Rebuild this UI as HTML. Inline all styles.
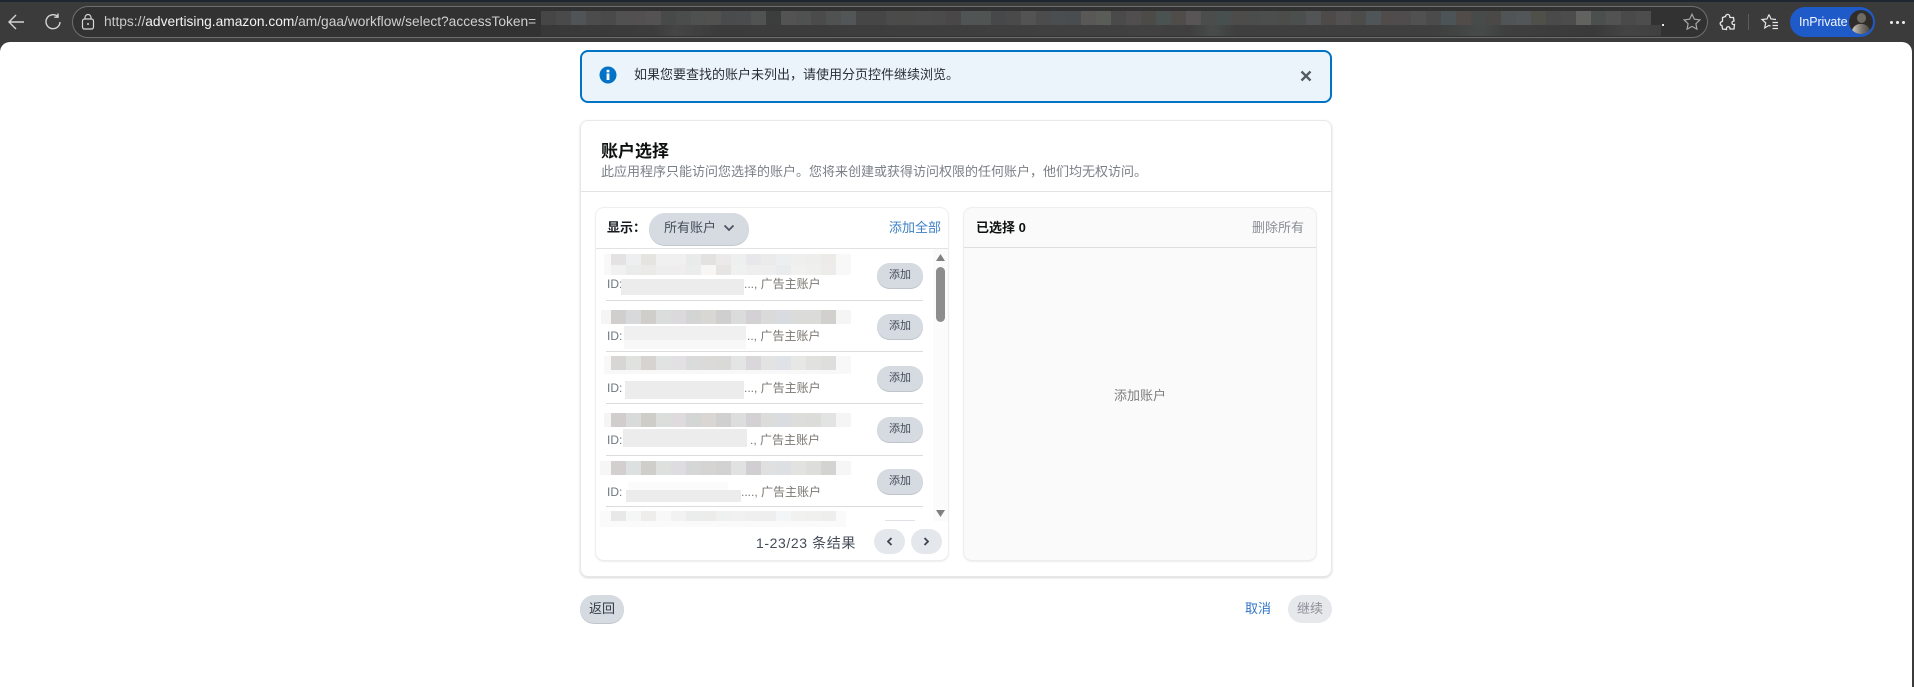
<!DOCTYPE html>
<html lang="zh"><head><meta charset="utf-8"><title>账户选择</title>
<style>
html,body{margin:0;padding:0;width:1914px;height:687px;overflow:hidden;background:#3b3b3b}
body{position:relative;font-family:"Liberation Sans","Noto Sans CJK SC",sans-serif;color:#16191f}
div,span,svg{position:absolute;white-space:nowrap;box-sizing:border-box}
.m{display:flex;position:absolute}
.m i{display:block;width:15px;height:100%;flex:none}
.btn{left:877px;width:46px;height:25px;border-radius:13px;background:#d6dbe2;box-shadow:0 1px 0 #bfc4cb;color:#444c58;font-size:11px;line-height:25px;text-align:center}
.ln{left:606px;width:317px;height:1px;background:#dcdcdc}
.id{left:607px;font-size:12px;line-height:16px;color:#6d7680}
.t{font-size:12px;line-height:16px;color:#7b7670}
.tx{font-size:13px;line-height:18px}
</style></head><body>

<!-- browser chrome -->
<div style="left:0;top:0;width:1914px;height:2px;background:#1e2731"></div>
<svg style="left:6px;top:12px" width="20" height="20" viewBox="0 0 20 20" fill="none" stroke="#d5d5d5" stroke-width="1.4"><path d="M18 10H3M10 3L3 10L10 17"/></svg>
<svg style="left:43px;top:12px" width="20" height="20" viewBox="0 0 20 20" fill="none" stroke="#d5d5d5" stroke-width="1.4"><path d="M14.8 4.6A7 7 0 1 0 17 10M15 1.5V5.2H11.3"/></svg>
<div style="left:72px;top:6px;width:1636px;height:32px;border:1.5px solid #6f6f6f;border-radius:16px;background:#323232"></div>
<svg style="left:80px;top:13px" width="16" height="18" viewBox="0 0 16 18" fill="none" stroke="#d8d8d8" stroke-width="1.2"><rect x="2.5" y="6" width="11" height="10" rx="2"/><path d="M5 6V4.5a3 3 0 0 1 6 0V6"/><circle cx="8" cy="11" r="1" fill="#d8d8d8" stroke="none"/></svg>
<div style="left:104px;top:13px;font-size:13.75px;line-height:18px;color:#f2f2f2"><span style="position:static;color:#c9c9c9">https://</span>advertising.amazon.com<span style="position:static;color:#d0d0d0">/am/gaa/workflow/select?accessToken=</span></div>

<div class="m" style="left:541px;top:11px;height:14px;width:1125px">
<i style="background:#464646"></i><i style="background:#4a4a4a"></i><i style="background:#505456"></i><i style="background:#4c4c4c"></i><i style="background:#4a4a4a"></i><i style="background:#515151"></i><i style="background:#525050"></i><i style="background:#545252"></i><i style="background:#484a4a"></i><i style="background:#4b4d4c"></i><i style="background:#4f5150"></i><i style="background:#515150"></i><i style="background:#4a4b4c"></i><i style="background:#4a4c4d"></i><i style="background:#515252"></i><i style="background:#3b3e3c"></i><i style="background:#525352"></i><i style="background:#505252"></i><i style="background:#4b4b4b"></i><i style="background:#505251"></i><i style="background:#525656"></i><i style="background:#464646"></i><i style="background:#464646"></i><i style="background:#4b4b4b"></i><i style="background:#4b4b4a"></i><i style="background:#4c4c4c"></i><i style="background:#4b4b4b"></i><i style="background:#4a4749"></i><i style="background:#505455"></i><i style="background:#505453"></i><i style="background:#46484a"></i><i style="background:#4a4a4a"></i><i style="background:#535353"></i><i style="background:#4c4c4c"></i>
<i style="background:#4a4e50"></i><i style="background:#4a4d50"></i><i style="background:#5a5857"></i><i style="background:#5a5c58"></i><i style="background:#4a4a4a"></i><i style="background:#504e4e"></i><i style="background:#4d4b48"></i><i style="background:#4a5351"></i><i style="background:#4f4c4a"></i><i style="background:#575555"></i><i style="background:#4b4c4c"></i><i style="background:#48504f"></i><i style="background:#4e4c4a"></i><i style="background:#4b4c4c"></i><i style="background:#4c4e4d"></i><i style="background:#4c4d4b"></i><i style="background:#4b504f"></i><i style="background:#525455"></i><i style="background:#4f4a4a"></i><i style="background:#525050"></i><i style="background:#4c4d4b"></i><i style="background:#505559"></i><i style="background:#514c4c"></i><i style="background:#4e4c4c"></i><i style="background:#515151"></i><i style="background:#4b4b4b"></i><i style="background:#4d5457"></i><i style="background:#514b4a"></i><i style="background:#474c4b"></i><i style="background:#4b4848"></i><i style="background:#505454"></i><i style="background:#535659"></i><i style="background:#50504a"></i><i style="background:#4a4a4a"></i><i style="background:#4c4c4c"></i><i style="background:#626260"></i><i style="background:#4b504e"></i><i style="background:#525252"></i><i style="background:#4a4a4a"></i><i style="background:#4d4d4d"></i></div>
<div style="left:541px;top:25px;width:1120px;height:11px;background:linear-gradient(90deg,#383838 0,#3c3c3c 10%,#454545 12%,#3b3b3b 16%,#3e3e3e 35%,#414141 55%,#3f3f3f 58%,#474c4b 60%,#3f3f3f 62%,#3f3f3f 80%,#464b4a 84%,#3f3f3f 86%,#3a3a3a 94%,#444444 97%,#404040 100%)"></div>
<div style="left:1662px;top:24px;width:2px;height:2px;background:#e8e8e8"></div>

<svg style="left:1682px;top:12px" width="20" height="20" viewBox="0 0 20 20" fill="none" stroke="#a8a8a8" stroke-width="1.2"><path d="M10 2.2l2.4 5 5.5.7-4 3.8 1 5.4-4.9-2.7-4.9 2.7 1-5.4-4-3.8 5.5-.7z"/></svg>
<svg style="left:1718px;top:12px" width="20" height="20" viewBox="0 0 20 20" fill="none" stroke="#e6e6e6" stroke-width="1.3"><path d="M7.5 4.5C7.5 2.5 10.5 1.500 11.500 3.500C12 4.500 11.500 5 12 5.500L15.500 5.500L16 9C14.500 9 13.800 10 14 11.200C14.200 12.500 15.500 12.800 16.500 12.500L16 17L12 17C12.300 15.500 11 14.500 9.800 14.800C8.500 15.100 8.200 16.300 8.500 17.500L4.500 17L4 13.500C2 13.500 1.500 10.500 3.500 9.800C4.500 9.500 4.500 9.800 4.500 9L4.500 5.500z"/></svg>
<div style="left:1748px;top:14px;width:1px;height:16px;background:#5c5c5c"></div>
<svg style="left:1760px;top:12px" width="20" height="20" viewBox="0 0 20 20" fill="none" stroke="#e6e6e6" stroke-width="1.2"><path d="M9 2.500l2 4.500 5 .5M9 2.500l-2 4.500-5 .5 3.700 3.400-1 5 4.300-2.500 1.500.8M12.500 10.500h5.500M12.500 13.500h5.500M12.500 16.500h5.500"/></svg>
<div style="left:1790px;top:7px;width:85px;height:30px;border-radius:15px;background:#1f5bc8"></div>
<div style="left:1799px;top:13px;font-size:12.500px;line-height:18px;color:#f2f6ff;font-weight:400;letter-spacing:-.1px">InPrivate</div>
<div style="left:1849px;top:10px;width:24px;height:24px;border-radius:50%;overflow:hidden;background:#2f2c29">
<div style="left:8px;top:3px;width:9px;height:10px;border-radius:50%;background:#6f6a64"></div>
<div style="left:3px;top:14px;width:18px;height:12px;border-radius:8px 8px 0 0;background:linear-gradient(90deg,#cfc9bf,#7a756e 55%,#4a4642)"></div></div>
<div style="left:1890px;top:21px;width:3px;height:3px;background:#eee;border-radius:50%"></div>
<div style="left:1896px;top:21px;width:3px;height:3px;background:#eee;border-radius:50%"></div>
<div style="left:1902px;top:21px;width:3px;height:3px;background:#eee;border-radius:50%"></div>

<!-- page -->
<div style="left:0;top:42px;width:1912px;height:645px;background:#fff;border-radius:10px 10px 0 0"></div>

<!-- alert -->
<div style="left:580px;top:50px;width:752px;height:53px;background:#ebf3fb;border:2px solid #0073c7;border-radius:8px"></div>
<svg style="left:599px;top:66px" width="18" height="18" viewBox="0 0 18 18"><circle cx="9" cy="9" r="8.500" fill="#0073c7"/><rect x="7.600" y="7.500" width="2.800" height="6.500" fill="#fff"/><rect x="7.600" y="3.800" width="2.800" height="2.600" fill="#fff"/></svg>
<div class="tx" style="left:634px;top:66px;color:#2a2f36">如果您要查找的账户未列出，请使用分页控件继续浏览。</div>
<svg style="left:1300px;top:70px" width="12" height="12" viewBox="0 0 12 12" stroke="#545b64" stroke-width="2.300" fill="none"><path d="M1.500 1.500L10.500 10.500M10.500 1.500L1.500 10.500"/></svg>

<!-- card -->
<div style="left:580px;top:120px;width:752px;height:457px;background:#fff;border:1px solid #e8e8e8;border-radius:8px;box-shadow:0 1px 2px rgba(0,0,0,.16)"></div>
<div style="left:601px;top:140px;font-size:17px;line-height:24px;font-weight:700;color:#0f1111">账户选择</div>
<div class="tx" style="left:601px;top:163px;color:#7b7f86">此应用程序只能访问您选择的账户。您将来创建或获得访问权限的任何账户，他们均无权访问。</div>
<div style="left:581px;top:191px;width:750px;height:1px;background:#e3e3e3"></div>

<!-- left panel -->
<div style="left:596px;top:208px;width:352px;height:352px;background:#fff;border-radius:8px;box-shadow:0 0 0 1px #eeeeee,0 1px 2px rgba(0,0,0,.18)"></div>
<div class="tx" style="left:607px;top:219px;font-weight:700;color:#16191f">显示：</div>
<div style="left:649px;top:213px;width:100px;height:32px;border-radius:16px;background:#d6dbe2;box-shadow:0 1px 0 #c3c8cf"></div>
<div class="tx" style="left:664px;top:219px;color:#444c58">所有账户</div>
<svg style="left:723px;top:224px" width="12" height="8" viewBox="0 0 12 8" fill="none" stroke="#4a5260" stroke-width="1.700"><path d="M1.500 1.500L6 6L10.500 1.500"/></svg>
<div class="tx" style="left:889px;top:219px;color:#3d7fc4">添加全部</div>
<div style="left:596px;top:248px;width:352px;height:1px;background:#e2e2e2"></div>

<!-- scrollbar -->
<div style="left:933px;top:249px;width:15px;height:272px;background:#fbfbfb"></div>
<svg style="left:936px;top:254px" width="9" height="7" viewBox="0 0 9 7"><path d="M4.500 0L9 7H0z" fill="#808080"/></svg>
<div style="left:936px;top:267px;width:9px;height:55px;border-radius:5px;background:#8d8d8d"></div>
<svg style="left:936px;top:510px" width="9" height="7" viewBox="0 0 9 7"><path d="M0 0H9L4.500 7z" fill="#808080"/></svg>

<!-- row 1 -->
<div style="left:604px;top:254px;width:247px;height:21px;background:#f8f8f9"></div>
<div class="m" style="left:611px;top:254px;height:11px"><i style="background:#e4e2e2"></i><i style="background:#edeff0"></i><i style="background:#e6e4e1"></i><i style="background:#eff0ef"></i><i style="background:#f0f0f0"></i><i style="background:#e9eaea"></i><i style="background:#e4e2e0"></i><i style="background:#ebe9e9"></i><i style="background:#eef0f0"></i><i style="background:#e8e8ea"></i><i style="background:#ecebeb"></i><i style="background:#eceef0"></i><i style="background:#efefed"></i><i style="background:#eeeeec"></i><i style="background:#ecebe8"></i></div>
<div class="m" style="left:611px;top:265px;height:10px"><i style="background:#f1f1f1"></i><i style="background:#eaebeb"></i><i style="background:#eceae8"></i><i style="background:#eeeeee"></i><i style="background:#efedee"></i><i style="background:#ebecec"></i><i style="background:#f7f6f4"></i><i style="background:#e7e4e4"></i><i style="background:#eff0f0"></i><i style="background:#eeeeef"></i><i style="background:#efeeee"></i><i style="background:#e9ebed"></i><i style="background:#f1f1ef"></i><i style="background:#efefed"></i><i style="background:#edecea"></i></div>
<div class="id" style="top:276px">ID:</div>
<div style="left:621px;top:279px;width:123px;height:16px;background:#ececec"></div>
<div class="t" style="left:744px;top:276px">..., 广告主账户</div>
<div class="btn" style="top:263px">添加</div>
<div class="ln" style="top:300px"></div>

<!-- row 2 -->
<div style="left:601px;top:310px;width:250px;height:14px;background:#f5f5f5"></div>
<div class="m" style="left:611px;top:310px;height:14px"><i style="background:#d1cece"></i><i style="background:#d7d9db"></i><i style="background:#cfceca"></i><i style="background:#d9dddb"></i><i style="background:#dcd9dd"></i><i style="background:#d3d5d5"></i><i style="background:#d9d7d4"></i><i style="background:#cfcfcf"></i><i style="background:#dadcdc"></i><i style="background:#d3d1d4"></i><i style="background:#d9dad9"></i><i style="background:#d8dbdf"></i><i style="background:#dbdcd9"></i><i style="background:#dbdbd9"></i><i style="background:#d1d0cc"></i></div>
<div class="id" style="top:328px">ID:</div>
<div style="left:624px;top:326px;width:122px;height:14px;background:#f0f0f0"></div>
<div style="left:624px;top:340px;width:122px;height:9px;background:#f8f8f8"></div>
<div class="t" style="left:747px;top:328px">.., 广告主账户</div>
<div class="btn" style="top:314px">添加</div>
<div class="ln" style="top:351px"></div>

<!-- row 3 -->
<div style="left:604px;top:356px;width:247px;height:18px;background:#f8f8f8"></div>
<div class="m" style="left:611px;top:356px;height:14px"><i style="background:#d7d6d4"></i><i style="background:#e0e2e0"></i><i style="background:#d6d3d0"></i><i style="background:#e0e3e1"></i><i style="background:#e2e0e3"></i><i style="background:#dadcdb"></i><i style="background:#dbdad8"></i><i style="background:#d9d9d7"></i><i style="background:#e3e4e4"></i><i style="background:#d9d7d9"></i><i style="background:#e4e3e3"></i><i style="background:#dfe2e6"></i><i style="background:#e7e7e5"></i><i style="background:#e1e1df"></i><i style="background:#dededc"></i></div>
<div class="id" style="top:380px">ID:</div>
<div style="left:625px;top:381px;width:119px;height:18px;background:#ececec"></div>
<div class="t" style="left:744px;top:380px">..., 广告主账户</div>
<div class="btn" style="top:366px">添加</div>
<div class="ln" style="top:403px"></div>

<!-- row 4 -->
<div style="left:604px;top:413px;width:247px;height:14px;background:#f5f5f6"></div>
<div class="m" style="left:611px;top:413px;height:14px"><i style="background:#d1cdcd"></i><i style="background:#d9dbdb"></i><i style="background:#cfcdc8"></i><i style="background:#dbdfdc"></i><i style="background:#dedade"></i><i style="background:#d4d6d5"></i><i style="background:#d9d6d4"></i><i style="background:#d0d0d0"></i><i style="background:#dcdddd"></i><i style="background:#d3d1d4"></i><i style="background:#dcdcdb"></i><i style="background:#d9dce0"></i><i style="background:#dddedb"></i><i style="background:#dcdcda"></i><i style="background:#e2e3e3"></i></div>
<div class="id" style="top:432px">ID:</div>
<div style="left:623px;top:429px;width:124px;height:18px;background:#ececec"></div>
<div class="t" style="left:750px;top:432px">., 广告主账户</div>
<div class="btn" style="top:417px">添加</div>
<div class="ln" style="top:455px"></div>

<!-- row 5 -->
<div style="left:600px;top:461px;width:251px;height:14px;background:#f6f6f7"></div>
<div class="m" style="left:611px;top:461px;height:14px"><i style="background:#d3cfcf"></i><i style="background:#dce0e0"></i><i style="background:#d0cecb"></i><i style="background:#dde1de"></i><i style="background:#dfdce1"></i><i style="background:#d5d6d6"></i><i style="background:#d6d4d2"></i><i style="background:#d2d2d2"></i><i style="background:#e0e1e1"></i><i style="background:#d1ced2"></i><i style="background:#e0e0e0"></i><i style="background:#dce0e3"></i><i style="background:#e2e3e1"></i><i style="background:#dddddb"></i><i style="background:#d3d3d1"></i></div>
<div class="id" style="top:484px">ID:</div>
<div style="left:626px;top:490px;width:115px;height:12px;background:#ececec"></div>
<div style="left:628px;top:482px;width:100px;height:8px;background:#fbfbfb"></div>
<div class="t" style="left:741px;top:484px">...., 广告主账户</div>
<div class="btn" style="top:469px">添加</div>
<div class="ln" style="top:506px"></div>

<!-- row 6 (clipped) -->
<div style="left:600px;top:511px;width:246px;height:16px;background:#fafafa"></div>
<div class="m" style="left:611px;top:511px;height:10px"><i style="background:#e9e8e8"></i><i style="background:#f5f6f6"></i><i style="background:#eeedeb"></i><i style="background:#f7f8f7"></i><i style="background:#f3f2f3"></i><i style="background:#ebecec"></i><i style="background:#ececeb"></i><i style="background:#eff0f0"></i><i style="background:#f1f1f1"></i><i style="background:#f0eff0"></i><i style="background:#eeeeee"></i><i style="background:#f3f5f7"></i><i style="background:#f1f1ef"></i><i style="background:#f0f0ee"></i><i style="background:#eeeeec"></i></div>
<div style="left:885px;top:520px;width:30px;height:1px;background:#dfe2e6"></div>

<!-- pagination -->
<div style="left:756px;top:533px;font-size:14px;line-height:20px;color:#444c58;letter-spacing:.6px">1-23/23 条结果</div>
<div style="left:874px;top:529px;width:31px;height:25px;border-radius:13px;background:#e4e7eb"></div>
<div style="left:911px;top:529px;width:31px;height:25px;border-radius:13px;background:#e4e7eb"></div>
<svg style="left:886px;top:537px" width="7" height="9" viewBox="0 0 7 9" fill="none" stroke="#3f4652" stroke-width="1.800"><path d="M5.500 1L2 4.500L5.500 8"/></svg>
<svg style="left:923px;top:537px" width="7" height="9" viewBox="0 0 7 9" fill="none" stroke="#3f4652" stroke-width="1.800"><path d="M1.500 1L5 4.500L1.500 8"/></svg>

<!-- right panel -->
<div style="left:964px;top:208px;width:352px;height:352px;background:#fafafa;border-radius:8px;box-shadow:0 0 0 1px #eeeeee,0 1px 2px rgba(0,0,0,.18)"></div>
<div class="tx" style="left:976px;top:219px;font-weight:700;color:#0f1111">已选择 0</div>
<div class="tx" style="left:1252px;top:219px;color:#8a8e95">删除所有</div>
<div style="left:964px;top:247px;width:352px;height:1px;background:#dedede"></div>
<div class="tx" style="left:1114px;top:387px;color:#7d7d7d">添加账户</div>

<!-- footer -->
<div style="left:580px;top:595px;width:44px;height:28px;border-radius:14px;background:#d6dbe2;box-shadow:0 1px 0 #c0c5cc"></div>
<div class="tx" style="left:589px;top:600px;color:#333a44">返回</div>
<div class="tx" style="left:1245px;top:600px;color:#2f74c6">取消</div>
<div style="left:1288px;top:595px;width:44px;height:28px;border-radius:14px;background:#e6e8ec"></div>
<div class="tx" style="left:1297px;top:600px;color:#8e8f98">继续</div>

</body></html>
